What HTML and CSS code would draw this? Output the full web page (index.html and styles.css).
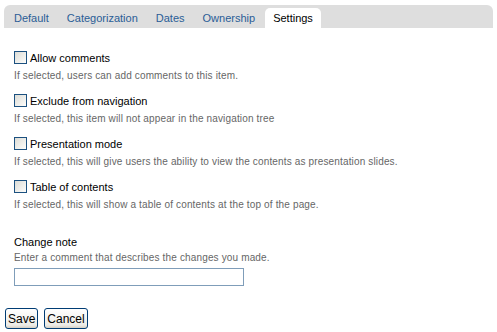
FILE: index.html
```html
<!DOCTYPE html>
<html lang="en">
<head>
    <meta charset="UTF-8">
    <meta name="viewport" content="width=device-width, initial-scale=1.0">
    <title>Settings</title>
    <link rel="stylesheet" href="styles.css">
</head>
<body>
    <div class="tabs">
        <a class="tab" href="#">Default</a>
        <a class="tab" href="#">Categorization</a>
        <a class="tab" href="#">Dates</a>
        <a class="tab" href="#">Ownership</a>
        <a class="tab selected" href="#">Settings</a>
    </div>

    <form class="panel">
        <div class="field">
            <label class="check"><input type="checkbox"><span class="box"></span>Allow comments</label>
            <div class="help">If selected, users can add comments to this item.</div>
        </div>
        <div class="field">
            <label class="check"><input type="checkbox"><span class="box"></span>Exclude from navigation</label>
            <div class="help">If selected, this item will not appear in the navigation tree</div>
        </div>
        <div class="field">
            <label class="check"><input type="checkbox"><span class="box"></span>Presentation mode</label>
            <div class="help">If selected, this will give users the ability to view the contents as presentation slides.</div>
        </div>
        <div class="field">
            <label class="check"><input type="checkbox"><span class="box"></span>Table of contents</label>
            <div class="help">If selected, this will show a table of contents at the top of the page.</div>
        </div>

        <div class="field note">
            <label for="changeNote">Change note</label>
            <div class="help">Enter a comment that describes the changes you made.</div>
            <input type="text" id="changeNote" class="text">
        </div>

        <div class="actions">
            <button type="button">Save</button>
            <button type="button">Cancel</button>
        </div>
    </form>
</body>
</html>
```

FILE: styles.css
```css
body {
    margin: 0;
    padding: 5px 4px 0 4px;
    font-family: "Liberation Sans", Arial, sans-serif;
    font-size: 11px;
    color: #000;
    background: #fff;
}

.tabs {
    display: flex;
    gap: 2px;
    align-items: flex-end;
    height: 23px;
    padding: 0 2px;
    background: #dedede;
    border-radius: 6px 6px 0 0;
    width: 485px;
}

.tab {
    display: block;
    height: 20px;
    line-height: 20px;
    padding: 0 8px;
    color: #2a5d96;
    text-decoration: none;
    border-radius: 5px 5px 0 0;
}

.tab.selected {
    background: #fff;
    color: #000;
}

.panel {
    padding: 23px 0 0 1px;
}

.field {
    margin: 0 0 0 9px;
    height: 43px;
}

.check {
    display: flex;
    align-items: center;
    height: 15px;
    line-height: 15px;
}

.check input {
    display: none;
}

.box {
    width: 11px;
    height: 11px;
    border: 1px solid #1c5180;
    background: linear-gradient(135deg, #dcdcd6, #fdfdfb);
    margin-right: 3px;
    margin-top: -2px;
}

.help {
    color: #666;
    font-size: 10px;
    line-height: 14px;
    margin-top: 3px;
    letter-spacing: 0.15px;
}

.note {
    margin-top: 12px;
    height: auto;
}

.note label {
    display: block;
    line-height: 15px;
}

.note .help {
    margin-top: 1px;
}

.text {
    display: block;
    box-sizing: border-box;
    width: 230px;
    height: 18px;
    margin: 3px 0 0 0;
    border: 1px solid #7f9db9;
    padding: 0 2px;
}

.actions {
    display: flex;
    gap: 6px;
    margin: 22px 0 0 0;
}

button {
    font-family: "Liberation Sans", Arial, sans-serif;
    font-size: 12px;
    height: 21px;
    padding: 0 2px;
    border: 1px solid #003c74;
    border-radius: 3px;
    background: linear-gradient(#ffffff, #ecebe6 85%, #d6d0c5);
    color: #000;
}
```
